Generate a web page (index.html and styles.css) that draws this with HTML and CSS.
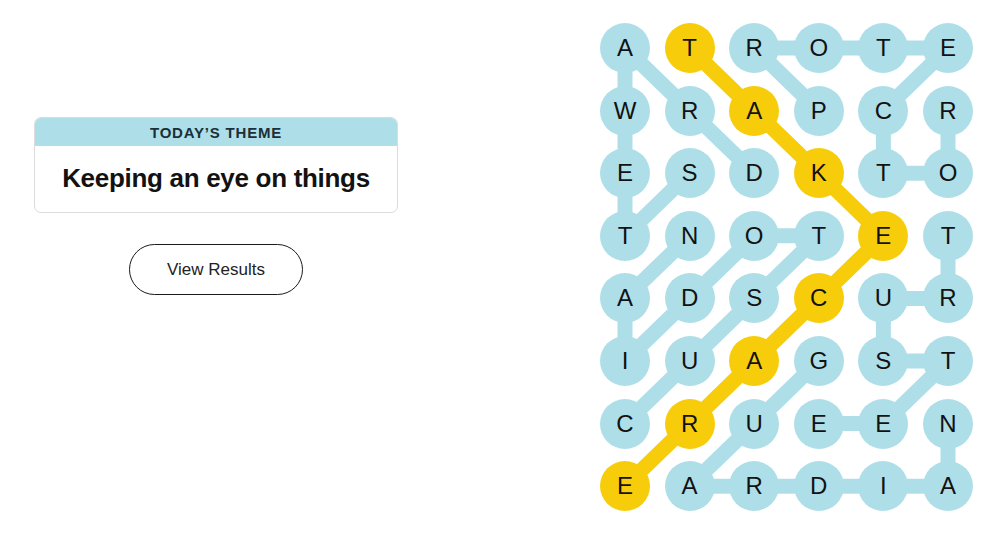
FILE: index.html
```html
<!DOCTYPE html>
<html lang="en">
<head>
<meta charset="utf-8">
<title>Strands</title>
<link rel="stylesheet" href="styles.css">
</head>
<body>
<main class="page">
  <section class="side">
    <div class="theme-card">
      <div class="theme-head">TODAY’S THEME</div>
      <div class="theme-body">Keeping an eye on things</div>
    </div>
    <button class="results-btn">View Results</button>
  </section>
  <section class="board">
    <svg class="links" width="374" height="489" viewBox="0 0 374 489">
      <g class="blue">
        <!-- STEWARD -->
        <polyline points="89.6,150.2 25,212.8 25,150.2 25,87.6 25,25 89.6,87.6 154.2,150.2"/>
        <!-- PROTECTOR -->
        <polyline points="218.8,87.6 154.2,25 218.8,25 283.4,25 348,25 283.4,87.6 283.4,150.2 348,150.2 348,87.6"/>
        <!-- CUSTODIAN -->
        <polyline points="25,400.6 89.6,338 154.2,275.4 218.8,212.8 154.2,212.8 89.6,275.4 25,338 25,275.4 89.6,212.8"/>
        <!-- TRUSTEE -->
        <polyline points="348,212.8 348,275.4 283.4,275.4 283.4,338 348,338 283.4,400.6 218.8,400.6"/>
        <!-- GUARDIAN -->
        <polyline points="218.8,338 154.2,400.6 89.6,463.2 154.2,463.2 218.8,463.2 283.4,463.2 348,463.2 348,400.6"/>
      </g>
      <g class="gold">
        <polyline points="89.6,25 154.2,87.6 218.8,150.2 283.4,212.8 218.8,275.4 154.2,338 89.6,400.6 25,463.2"/>
      </g>
    </svg>
    <div class="grid">
      <span class="cell">A</span><span class="cell gold-cell">T</span><span class="cell">R</span><span class="cell">O</span><span class="cell">T</span><span class="cell">E</span>
      <span class="cell">W</span><span class="cell">R</span><span class="cell gold-cell">A</span><span class="cell">P</span><span class="cell">C</span><span class="cell">R</span>
      <span class="cell">E</span><span class="cell">S</span><span class="cell">D</span><span class="cell gold-cell">K</span><span class="cell">T</span><span class="cell">O</span>
      <span class="cell">T</span><span class="cell">N</span><span class="cell">O</span><span class="cell">T</span><span class="cell gold-cell">E</span><span class="cell">T</span>
      <span class="cell">A</span><span class="cell">D</span><span class="cell">S</span><span class="cell gold-cell">C</span><span class="cell">U</span><span class="cell">R</span>
      <span class="cell">I</span><span class="cell">U</span><span class="cell gold-cell">A</span><span class="cell">G</span><span class="cell">S</span><span class="cell">T</span>
      <span class="cell">C</span><span class="cell gold-cell">R</span><span class="cell">U</span><span class="cell">E</span><span class="cell">E</span><span class="cell">N</span>
      <span class="cell gold-cell">E</span><span class="cell">A</span><span class="cell">R</span><span class="cell">D</span><span class="cell">I</span><span class="cell">A</span>
    </div>
  </section>
</main>
</body>
</html>
```

FILE: styles.css
```css
html, body {
  margin: 0;
  padding: 0;
  background: #ffffff;
}

body {
  font-family: "Liberation Sans", Arial, sans-serif;
  color: #121212;
}

.page {
  display: flex;
  align-items: flex-start;
  width: 997px;
  height: 546px;
  overflow: hidden;
}

.side {
  width: 432px;
  padding-top: 117px;
  display: flex;
  flex-direction: column;
  align-items: center;
}

.theme-card {
  width: 362px;
  border: 1px solid #dcdcdc;
  border-radius: 7px;
  overflow: hidden;
  background: #fff;
}

.theme-head {
  background: #aedfe9;
  height: 28px;
  line-height: 29px;
  text-align: center;
  font-family: "Liberation Sans", Arial, sans-serif;
  font-weight: 700;
  font-size: 15px;
  letter-spacing: 0.8px;
  color: #1b2f38;
}

.theme-body {
  height: 66px;
  line-height: 64px;
  text-align: center;
  font-family: "Liberation Sans", Arial, sans-serif;
  font-weight: 700;
  font-size: 26px;
  letter-spacing: -0.3px;
  color: #121212;
}

.results-btn {
  margin-top: 31px;
  width: 174px;
  height: 51px;
  border: 1px solid #1a1a1a;
  border-radius: 26px;
  background: #fff;
  font-family: "Liberation Sans", Arial, sans-serif;
  font-size: 17px;
  color: #222;
  padding: 0;
}

.board {
  position: relative;
  margin-left: 168px;
  margin-top: 23px;
  width: 374px;
  height: 489px;
}

.links {
  position: absolute;
  left: 0;
  top: 0;
}

.links polyline {
  fill: none;
  stroke-width: 15;
  stroke-linecap: round;
  stroke-linejoin: round;
}

.blue polyline {
  stroke: #aedfe9;
}

.gold polyline {
  stroke: #f7cd0b;
}

.grid {
  position: relative;
  display: grid;
  grid-template-columns: repeat(6, 50px);
  grid-auto-rows: 50px;
  column-gap: 14.6px;
  row-gap: 12.6px;
}

.cell {
  width: 50px;
  height: 50px;
  border-radius: 50%;
  background: #aedfe9;
  display: flex;
  align-items: center;
  justify-content: center;
  font-family: "Liberation Sans", Arial, sans-serif;
  font-size: 24px;
  color: #121212;
}

.gold-cell {
  background: #f7cd0b;
}
```
